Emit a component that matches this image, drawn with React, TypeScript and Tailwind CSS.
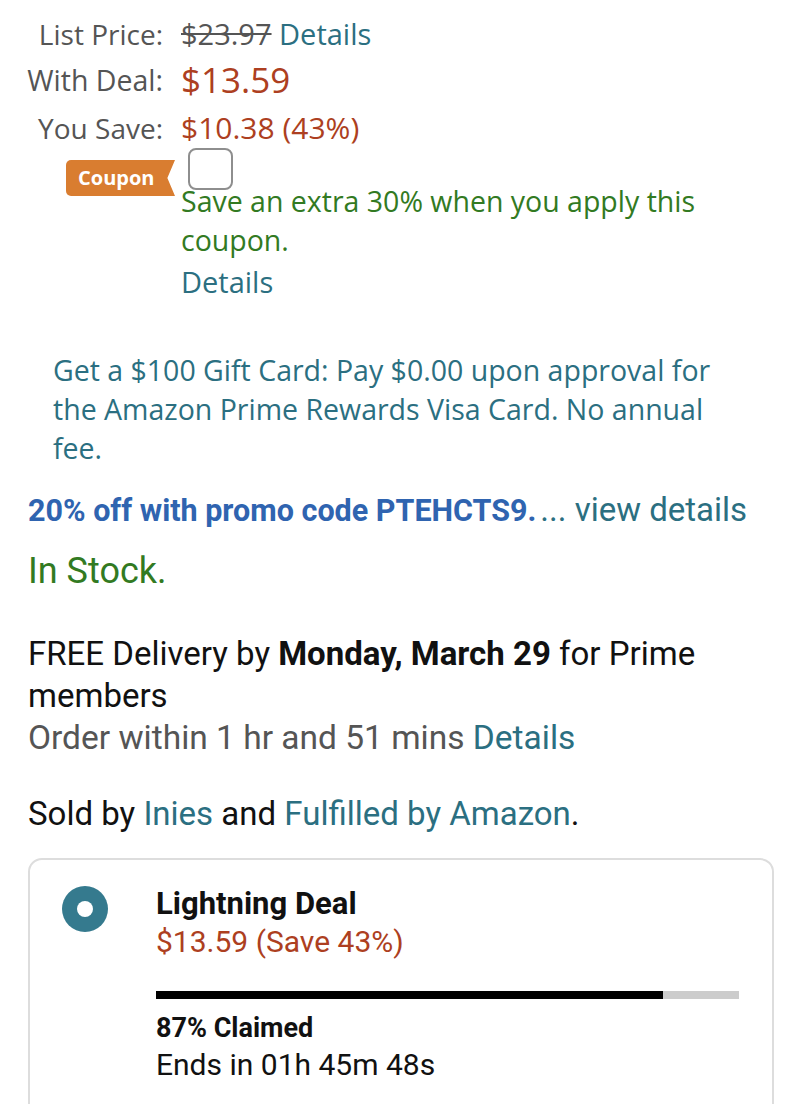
export default function App() {
  const top = { fontFamily: '"Open Sans", "Noto Sans", sans-serif' };
  const ember = { fontFamily: 'Roboto, "Noto Sans", sans-serif' };

  return (
    <div className="w-[800px] h-[1104px] overflow-hidden bg-white">
      {/* Price block */}
      <div style={top} className="pt-[14px]">
        <div className="grid grid-cols-[163px_1fr] gap-x-[18px] items-center">
          <div className="text-right text-[28px] text-[#555555] leading-[40px]">List Price:</div>
          <div className="text-[29px] leading-[40px]">
            <span className="text-[#555555] line-through">$23.97</span>{" "}
            <span className="text-[#2b6f81]">Details</span>
          </div>

          <div className="text-right text-[28.5px] text-[#555555] leading-[52px]">With Deal:</div>
          <div className="text-[35px] text-[#ad3f21] leading-[52px]">$13.59</div>

          <div className="text-right text-[28px] text-[#555555] leading-[44px]">You Save:</div>
          <div className="text-[30px] text-[#ad3f21] leading-[44px]">$10.38 (43%)</div>
        </div>

        <div className="grid grid-cols-[163px_1fr] gap-x-[18px]">
          <div className="flex justify-end pt-[10px] -mr-[12px]">
            <div className="h-[36px] w-[109px] bg-[#d97d30] rounded-l-[5px] [clip-path:polygon(0_0,100%_0,93%_50%,100%_100%,0_100%)] flex items-center pl-[12px] text-white font-bold text-[20px]">
              Coupon
            </div>
          </div>
          <div>
            <div className="-mt-[2px] ml-[7px] w-[45px] h-[42px] rounded-[8px] border-2 border-[#8e8e8e] bg-white"></div>
            <div className="text-[28.5px] leading-[39px] text-[#327a22] -mt-[8px] pr-[40px]">
              Save an extra 30% when you apply this coupon.
            </div>
            <div className="text-[29px] leading-[44px] text-[#2b6f81]">Details</div>
          </div>
        </div>

        <div className="pl-[53px] pr-[50px] mt-[47px] text-[28.5px] leading-[39px] text-[#2b6f81]">
          Get a $100 Gift Card: Pay $0.00 upon approval for the Amazon Prime Rewards Visa Card. No annual fee.
        </div>
      </div>

      {/* Lower block */}
      <div style={ember} className="px-[28px]">
        <div className="mt-[22px] leading-[40px] whitespace-nowrap">
          <span className="font-bold text-[30.5px] text-[#2f64b0]">20% off with promo code PTEHCTS9.</span>{" "}
          <span className="text-[33px] text-[#2b6f81]">... view details</span>
        </div>

        <div className="mt-[13px] text-[36px] leading-[44px] text-[#327a22]">In Stock.</div>

        <div className="mt-[40px] text-[33px] leading-[42px] text-[#111111]">
          FREE Delivery by <span className="font-bold">Monday, March 29</span> for Prime members
        </div>
        <div className="text-[33.5px] leading-[42px] text-[#555555]">
          Order within 1 hr and 51 mins <span className="text-[#2b6f81]">Details</span>
        </div>

        <div className="mt-[34px] text-[33px] leading-[42px] text-[#111111]">
          Sold by <span className="text-[#2b6f81]">Inies</span> and{" "}
          <span className="text-[#2b6f81]">Fulfilled by Amazon</span>.
        </div>

        {/* Lightning deal card */}
        <div className="mt-[23px] w-[746px] h-[300px] border-2 border-[#dddddd] rounded-[14px] flex">
          <div className="w-[126px] pl-[32px] pt-[26px] shrink-0">
            <div className="w-[46px] h-[46px] rounded-full bg-[#357a8e] flex items-center justify-center">
              <div className="w-[16px] h-[16px] rounded-full bg-white"></div>
            </div>
          </div>
          <div className="flex-1 pr-[33px] pt-[25px]">
            <div className="text-[31px] leading-[38px] font-bold text-[#111111]">Lightning Deal</div>
            <div className="text-[30px] leading-[38px] text-[#ad3f21]">$13.59 (Save 43%)</div>
            <div className="mt-[30px] h-[8px] bg-[#cccccc] flex">
              <div className="h-full bg-black" style={{ width: "87%" }}></div>
            </div>
            <div className="mt-[12px] text-[27px] leading-[34px] font-bold text-[#111111]">87% Claimed</div>
            <div className="text-[30px] leading-[40px] text-[#111111]">Ends in 01h 45m 48s</div>
          </div>
        </div>
      </div>
    </div>
  );
}
